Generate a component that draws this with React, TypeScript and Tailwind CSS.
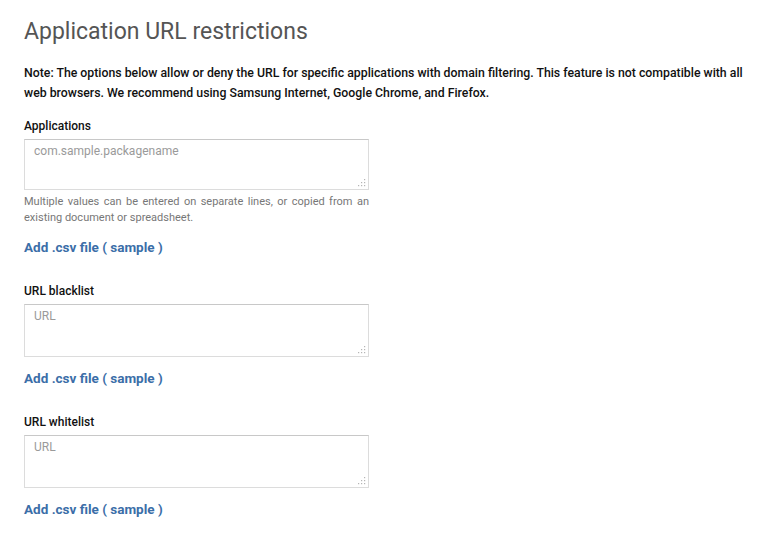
import React from 'react';

const font = { fontFamily: 'Roboto, "Liberation Sans", sans-serif' };

const Grip = () => (
  <svg className="pointer-events-none absolute bottom-[3px] right-[3px]" width="8" height="8" viewBox="0 0 8 8">
    <rect x="6" y="0" width="1.2" height="1.2" fill="#b5b5b5" />
    <rect x="6" y="3" width="1.2" height="1.2" fill="#b5b5b5" />
    <rect x="3" y="3" width="1.2" height="1.2" fill="#b5b5b5" />
    <rect x="6" y="6" width="1.2" height="1.2" fill="#b5b5b5" />
    <rect x="3" y="6" width="1.2" height="1.2" fill="#b5b5b5" />
    <rect x="0" y="6" width="1.2" height="1.2" fill="#b5b5b5" />
  </svg>
);

const Field = ({ label, placeholder, help }: { label: string; placeholder: string; help?: string }) => (
  <div className="flex flex-col">
    <label className="text-[12px] font-medium leading-[18px] text-[#111]">{label}</label>
    <div className="relative mt-[4px] w-[345px]">
      <textarea
        placeholder={placeholder}
        className={`block w-full resize-none border border-[#dcdcdc] border-t-[#c8c8c8] px-[9px] py-[2px] text-[12px] leading-[18px] text-[#333] placeholder:text-[#9a9a9a] outline-none ${help ? 'h-[51px]' : 'h-[53px]'}`}
      />
      <Grip />
    </div>
    {help && (
      <p className="mt-[4px] w-[345px] text-justify text-[11px] leading-[16px] text-[#777]">{help}</p>
    )}
    <a href="#" className="mt-[12px] text-[13.5px] font-bold leading-[18px] text-[#3b6ea8]">
      Add .csv file ( sample )
    </a>
  </div>
);

export default function App() {
  return (
    <div className="min-h-screen bg-white pl-[24px] pr-[16px] pt-[16px]" style={font}>
      <h1 className="text-[23px] font-normal leading-[32px] text-[#555]">Application URL restrictions</h1>
      <p className="mt-[15px] text-[12.3px] font-medium leading-[20px] text-[#111]">
        Note: The options below allow or deny the URL for specific applications with domain filtering. This feature is
        not compatible with all web browsers. We recommend using Samsung Internet, Google Chrome, and Firefox.
      </p>
      <div className="mt-[14px] flex flex-col gap-[26px]">
        <Field
          label="Applications"
          placeholder="com.sample.packagename"
          help="Multiple values can be entered on separate lines, or copied from an existing document or spreadsheet."
        />
        <Field label="URL blacklist" placeholder="URL" />
        <Field label="URL whitelist" placeholder="URL" />
      </div>
    </div>
  );
}
